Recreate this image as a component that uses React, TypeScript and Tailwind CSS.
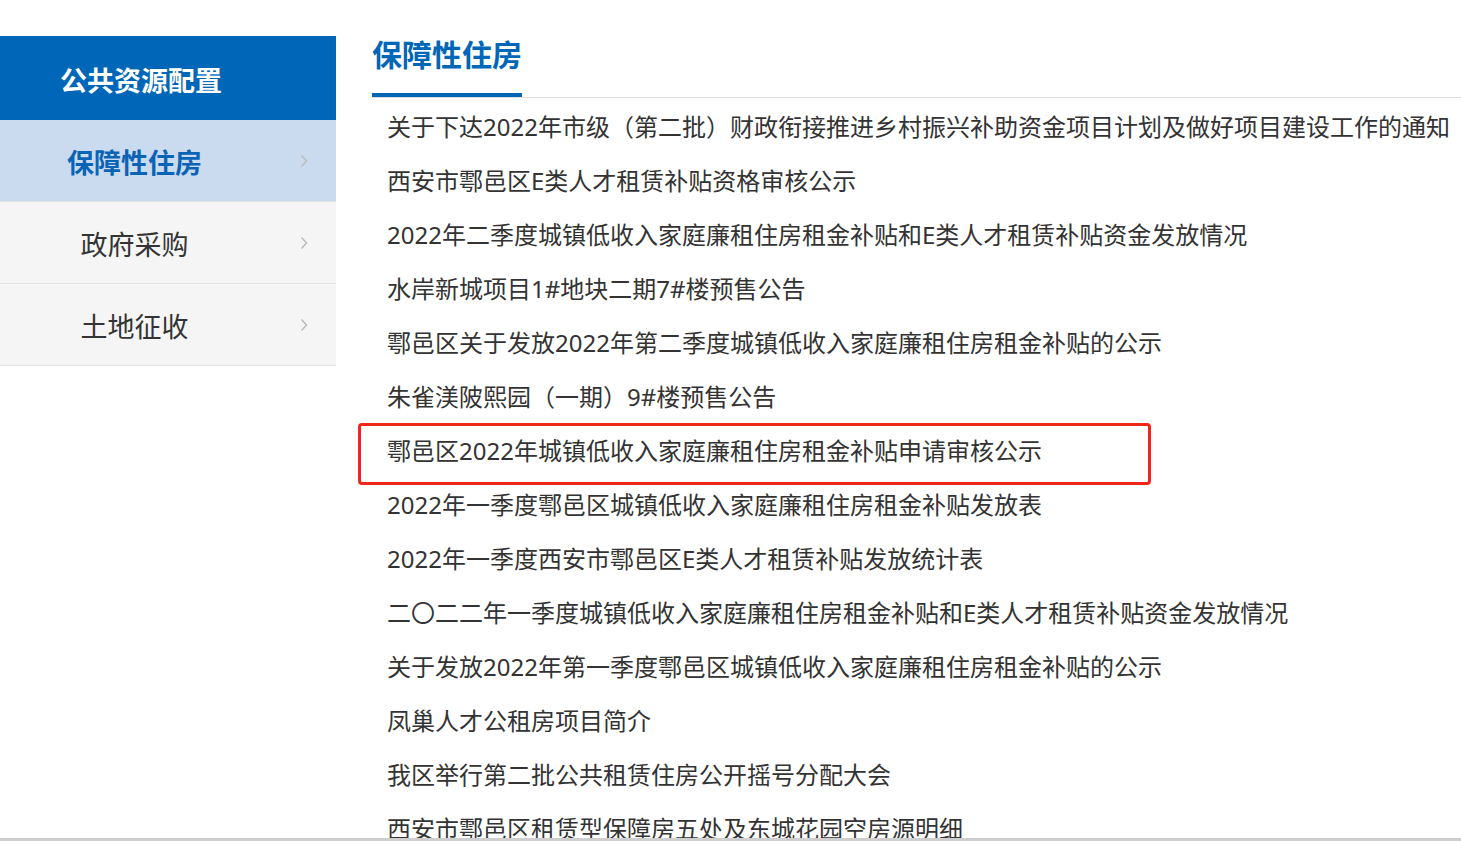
const menu = [
  { label: '保障性住房', active: true },
  { label: '政府采购', active: false },
  { label: '土地征收', active: false },
];

const news = [
  '关于下达2022年市级（第二批）财政衔接推进乡村振兴补助资金项目计划及做好项目建设工作的通知',
  '西安市鄠邑区E类人才租赁补贴资格审核公示',
  '2022年二季度城镇低收入家庭廉租住房租金补贴和E类人才租赁补贴资金发放情况',
  '水岸新城项目1#地块二期7#楼预售公告',
  '鄠邑区关于发放2022年第二季度城镇低收入家庭廉租住房租金补贴的公示',
  '朱雀渼陂熙园（一期）9#楼预售公告',
  '鄠邑区2022年城镇低收入家庭廉租住房租金补贴申请审核公示',
  '2022年一季度鄠邑区城镇低收入家庭廉租住房租金补贴发放表',
  '2022年一季度西安市鄠邑区E类人才租赁补贴发放统计表',
  '二〇二二年一季度城镇低收入家庭廉租住房租金补贴和E类人才租赁补贴资金发放情况',
  '关于发放2022年第一季度鄠邑区城镇低收入家庭廉租住房租金补贴的公示',
  '凤巢人才公租房项目简介',
  '我区举行第二批公共租赁住房公开摇号分配大会',
  '西安市鄠邑区租赁型保障房五处及东城花园空房源明细',
];

function Chevron() {
  return (
    <svg width="8" height="14" viewBox="0 0 8 14" className="ml-[31px] mt-[1px]">
      <polyline points="1.5,1.5 6.5,7 1.5,12.5" fill="none" stroke="#bdbdbd" strokeWidth="1.6" />
    </svg>
  );
}

function Sidebar() {
  return (
    <aside className="w-[336px] shrink-0 pt-[36px]">
      <div className="h-[84px] bg-[#0066b8] flex items-center pl-[60px] pt-[6px]">
        <span className="text-white text-[27px] font-bold">公共资源配置</span>
      </div>
      {menu.map((item) => (
        <div
          key={item.label}
          className={
            item.active
              ? 'h-[82px] flex items-center border-b border-[#e2e2e2] bg-[#cadbf0]'
              : 'h-[82px] flex items-center border-b border-[#e2e2e2] bg-[#f5f5f5]'
          }
        >
          <span
            className={
              item.active
                ? 'w-[269px] pt-[5px] text-center text-[27px] font-bold text-[#0b63b5]'
                : 'w-[269px] pt-[5px] text-center text-[27px] text-[#333]'
            }
          >
            {item.label}
          </span>
          <Chevron />
        </div>
      ))}
    </aside>
  );
}

export default function App() {
  return (
    <div className="h-[841px] w-full flex flex-col overflow-hidden bg-white font-['Noto_Sans','Noto_Sans_CJK_SC',sans-serif]">
      <div className="flex-1 min-h-0 flex overflow-hidden">
        <Sidebar />

        <main className="flex-1 ml-[36px] pt-[36px]">
          {/* Title */}
          <div className="border-b border-[#dddddd]">
            <h1 className="inline-block text-[30px] leading-[38px] font-bold text-[#0066b8] pb-[19px] border-b-4 border-[#0066b8] w-[150px] whitespace-nowrap">
              保障性住房
            </h1>
          </div>

          {/* News list */}
          <ul className="pt-[2px]">
            {news.map((title, i) => (
              <li key={i} className="relative pl-[15px] text-[24px] leading-[54px] text-[#333] whitespace-nowrap">
                {title}
                {i === 6 && (
                  <div className="absolute left-[-14px] top-[-1px] w-[793px] h-[62px] border-[3px] border-[#f02618] rounded-[4px] pointer-events-none"></div>
                )}
              </li>
            ))}
          </ul>
        </main>
      </div>
      <div className="h-[3px] shrink-0 bg-[#cfcfcf]"></div>
    </div>
  );
}
